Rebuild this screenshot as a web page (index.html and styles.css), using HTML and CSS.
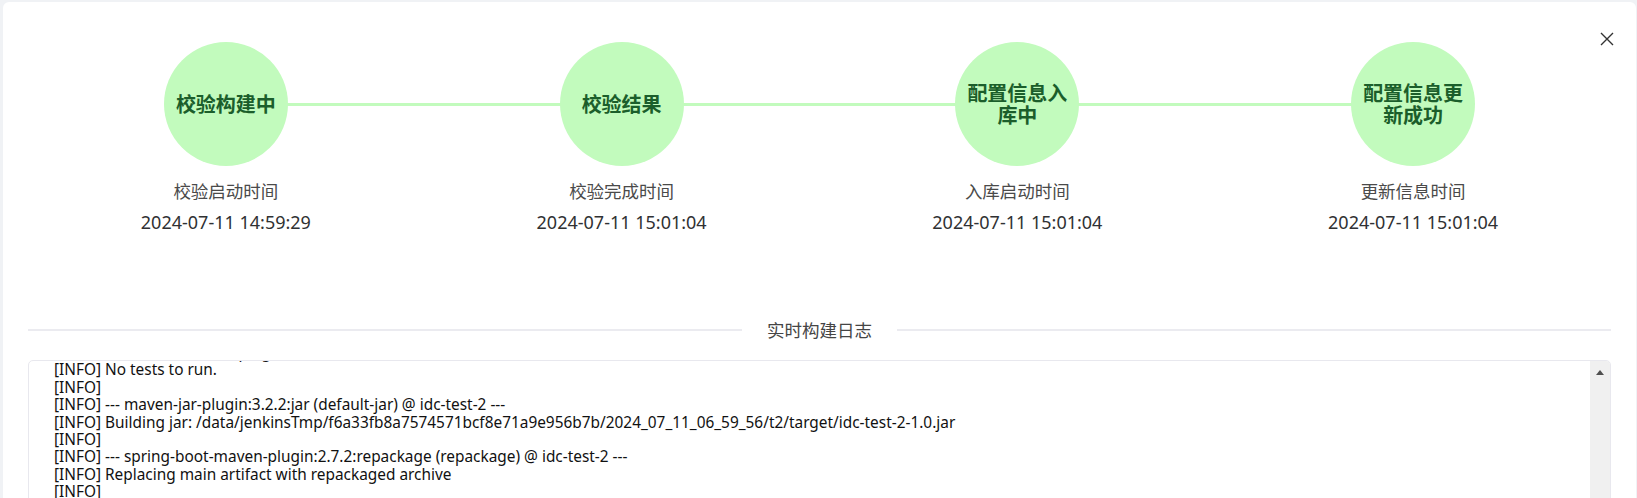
FILE: index.html
```html
<!DOCTYPE html>
<html lang="zh-CN">
<head>
<meta charset="utf-8">
<title>构建进度</title>
<link rel="stylesheet" href="styles.css">
</head>
<body>
<div class="card">
  <button class="close" aria-label="关闭">
    <svg width="14" height="14" viewBox="0 0 14 14"><path d="M1 1 L13 13 M13 1 L1 13" stroke="#333" stroke-width="1.4" fill="none"/></svg>
  </button>
  <div class="steps">
    <div class="step">
      <div class="circle">校验构建中</div>
      <div class="label">校验启动时间</div>
      <div class="time">2024-07-11 14:59:29</div>
    </div>
    <div class="step">
      <div class="circle">校验结果</div>
      <div class="label">校验完成时间</div>
      <div class="time">2024-07-11 15:01:04</div>
    </div>
    <div class="step">
      <div class="circle">配置信息入库中</div>
      <div class="label">入库启动时间</div>
      <div class="time">2024-07-11 15:01:04</div>
    </div>
    <div class="step">
      <div class="circle">配置信息更新成功</div>
      <div class="label">更新信息时间</div>
      <div class="time">2024-07-11 15:01:04</div>
    </div>
  </div>
  <div class="divider"><span class="divider-text">实时构建日志</span></div>
  <div class="log">
    <div class="log-text" id="logText">
      <div class="log-line">[INFO] --- maven-surefire-plugin:2.22.2:test (default-test) @ idc-test-2 ---</div>
      <div class="log-line">[INFO] No tests to run.</div>
      <div class="log-line">[INFO]</div>
      <div class="log-line">[INFO] --- maven-jar-plugin:3.2.2:jar (default-jar) @ idc-test-2 ---</div>
      <div class="log-line">[INFO] Building jar: /data/jenkinsTmp/f6a33fb8a7574571bcf8e71a9e956b7b/2024_07_11_06_59_56/t2/target/idc-test-2-1.0.jar</div>
      <div class="log-line">[INFO]</div>
      <div class="log-line">[INFO] --- spring-boot-maven-plugin:2.7.2:repackage (repackage) @ idc-test-2 ---</div>
      <div class="log-line">[INFO] Replacing main artifact with repackaged archive</div>
      <div class="log-line">[INFO]</div>
      <div class="log-line">[INFO] ------------------------------------------------------------------------</div>
      <div class="log-line">[INFO] BUILD SUCCESS</div>
      <div class="log-line">[INFO] ------------------------------------------------------------------------</div>
      <div class="log-line">[INFO] Total time:  12.345 s</div>
      <div class="log-line">[INFO] Finished at: 2024-07-11T15:00:58+08:00</div>
      <div class="log-line">[INFO] ------------------------------------------------------------------------</div>
    </div>
    <div class="scrollbar"><span class="arrow-up"></span></div>
  </div>
</div>
<script>
  document.getElementById('logText').scrollTop = 17;
</script>
</body>
</html>
```

FILE: styles.css
```css
html, body {
  height: 100%;
}
body {
  margin: 0;
  background: #f0f2f5;
  overflow: hidden;
  font-family: "Noto Sans", "Noto Sans CJK SC", sans-serif;
}
.card {
  position: relative;
  margin: 2px 1px 0 3px;
  height: calc(100% - 2px);
  background: #fff;
  border-radius: 6px 6px 0 0;
  padding: 40px 25px 0 25px;
  box-sizing: border-box;
}
.close {
  position: absolute;
  top: 30px;
  right: 22px;
  width: 14px;
  height: 14px;
  padding: 0;
  border: 0;
  background: none;
  display: flex;
}
.steps {
  display: grid;
  grid-template-columns: repeat(4, 1fr);
}
.step {
  position: relative;
  display: flex;
  flex-direction: column;
  align-items: center;
}
.step:not(:last-child)::after {
  content: "";
  position: absolute;
  top: 61px;
  left: 50%;
  width: 100%;
  height: 3px;
  background: #c2fbbd;
}
.circle {
  position: relative;
  z-index: 1;
  width: 124px;
  height: 124px;
  border-radius: 50%;
  background: #c2fbbd;
  color: #1b5e2b;
  font-family: "Noto Sans CJK SC", sans-serif;
  font-weight: 700;
  font-size: 20px;
  line-height: 22.5px;
  display: flex;
  align-items: center;
  justify-content: center;
  text-align: center;
  padding: 0 10px;
  box-sizing: border-box;
}
.label {
  margin-top: 9.5px;
  font-size: 17.5px;
  line-height: 31px;
  color: #4a4a4a;
}
.time {
  font-size: 18px;
  line-height: 31px;
  color: #303133;
}
.divider {
  margin-top: 77px;
  display: flex;
  align-items: center;
  gap: 25px;
}
.divider::before,
.divider::after {
  content: "";
  flex: 1;
  height: 2px;
  background: #ebebf0;
}
.divider-text {
  font-size: 17.5px;
  line-height: 31px;
  color: #454545;
}
.log {
  margin-top: 14.5px;
  height: 160px;
  border: 1px solid #e8e8ee;
  border-radius: 5px;
  display: flex;
  overflow: hidden;
}
.log-text {
  flex: 1;
  overflow: hidden;
  padding-left: 25px;
  font-size: 15.4px;
  line-height: 17.4px;
  color: #111;
}
.log-line {
  white-space: nowrap;
  height: 17.4px;
}
.scrollbar {
  width: 20px;
  background: #f0f0f0;
  display: flex;
  justify-content: center;
}
.arrow-up {
  margin-top: 9px;
  width: 0;
  height: 0;
  border-left: 4.5px solid transparent;
  border-right: 4.5px solid transparent;
  border-bottom: 5px solid #505050;
}
```
